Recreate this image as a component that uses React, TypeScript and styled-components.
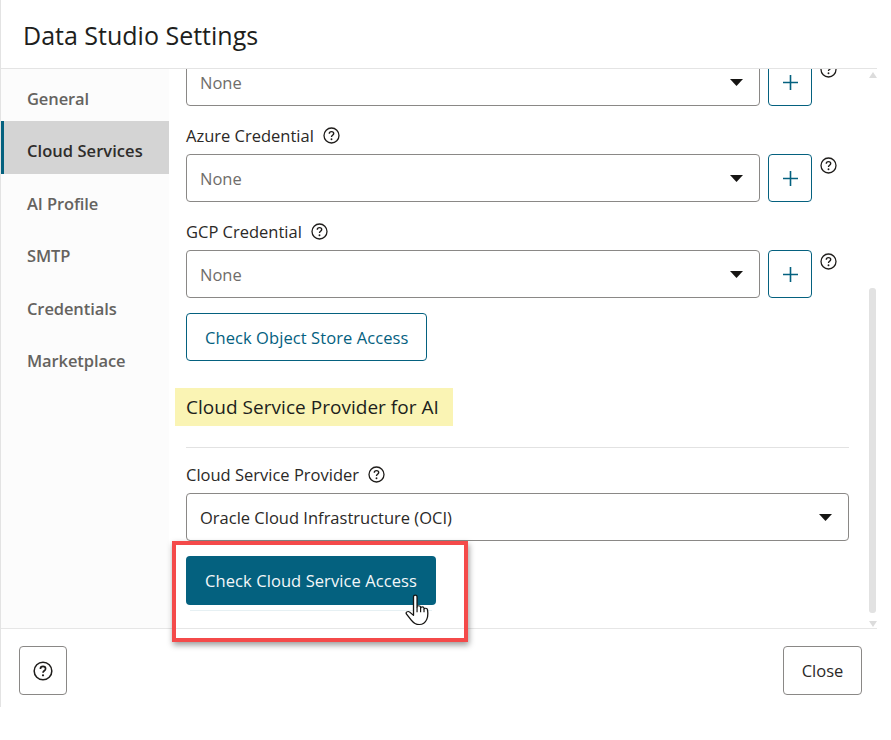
import * as React from 'react';
import styled, { createGlobalStyle } from 'styled-components';

const GlobalStyle = createGlobalStyle`
    html, body {
        margin: 0;
        padding: 0;
        background: #fff;
    }
    body {
        font-family: 'Open Sans', 'Noto Sans', sans-serif;
        color: #201e1c;
    }
`;

const HelpIcon: React.FC<{ size?: number }> = ({ size = 17 }) => (
    <svg width={size} height={size} viewBox="0 0 17 17" fill="none">
        <circle cx="8.5" cy="8.5" r="7.5" stroke="#1f1d1b" strokeWidth="1.3" />
        <path d="M6.3 6.7c0-1.3 1-2.1 2.2-2.1s2.2.8 2.2 2c0 1.7-2.2 1.7-2.2 3.3" stroke="#1f1d1b" strokeWidth="1.4" />
        <circle cx="8.5" cy="12.2" r=".95" fill="#1f1d1b" />
    </svg>
);

const Caret = () => (
    <svg width="13" height="7" viewBox="0 0 13 7">
        <path d="M0 0h13L6.5 7z" fill="#161513" />
    </svg>
);

const PlusIcon = () => (
    <svg width="15" height="15" viewBox="0 0 15 15">
        <path d="M7.5 0v15M0 7.5h15" stroke="#04617f" strokeWidth="1.6" />
    </svg>
);

const HandCursor = () => (
    <svg width="26" height="32" viewBox="0 0 22 31" preserveAspectRatio="none">
        <path
            d="M7.2 2.600c0-2 3-2 3 0v10c0-1.600 2.800-1.600 3 0v1c.1-1.500 2.700-1.500 2.900 0v1.200c.2-1.400 2.700-1.300 2.900.3.5 3.500.4 7-.6 9.500-.9 2.400-2.800 5-6.300 5-3.500 0-5.100-1.800-6.800-4.300L1.300 19.500c-1.100-1.800 1.100-3.400 2.700-2l3.200 3.200z"
            fill="#fff"
            stroke="#161513"
            strokeWidth="1.1"
            strokeLinejoin="round"
        />
        <path d="M10.200 12.600v5M13.200 13.600v4M16.100 14.800v3" stroke="#161513" strokeWidth="1" fill="none" />
    </svg>
);

const Page = styled.div`
    width: 891px;
    height: 740px;
    background: #fff;
    overflow: hidden;
    position: relative;
`;

const Dialog = styled.div`
    width: 877px;
    height: 707px;
    border-left: 1px solid #e3e3e3;
    box-sizing: border-box;
    display: flex;
    flex-direction: column;
`;

const Header = styled.header`
    height: 69px;
    flex: none;
    box-sizing: border-box;
    border-bottom: 1px solid #e4e4e4;
    padding: 18px 0 0 22px;
    font-size: 25px;
    line-height: 34px;
`;

const Body = styled.div`
    flex: 1;
    min-height: 0;
    display: flex;
`;

const Sidebar = styled.nav`
    width: 168px;
    flex: none;
    background: #fcfcfc;
`;

const NavItem = styled.div<{ $active?: boolean }>`
    height: 52.5px;
    box-sizing: border-box;
    padding: 18px 0 0 ${(p) => (p.$active ? 23 : 26)}px;
    font-size: 16.5px;
    line-height: 24px;
    font-weight: 600;
    letter-spacing: ${(p) => (p.$active ? '0.05px' : '-0.1px')};
    color: ${(p) => (p.$active ? '#2f2d2b' : '#65635f')};
    background: ${(p) => (p.$active ? '#d4d4d4' : 'transparent')};
    border-left: ${(p) => (p.$active ? '3px solid #04617f' : 'none')};
    &:first-child {
        margin-top: -0.5px;
    }
`;

const ContentArea = styled.main`
    flex: 1;
    min-width: 0;
    position: relative;
    overflow: hidden;
    padding-left: 17px;
`;

const ScrollInner = styled.div`
    width: 663px;
    margin-top: -11px;
    display: flex;
    flex-direction: column;
`;

const Label = styled.div`
    height: 24px;
    margin-bottom: 7px;
    display: flex;
    align-items: center;
    gap: 9px;
    font-size: 16.5px;
    color: #2b2927;
`;

const FieldRow = styled.div`
    display: flex;
    align-items: flex-start;
    margin-bottom: 17px;
`;

const Select = styled.div<{ $muted?: boolean }>`
    flex: 1;
    height: 48px;
    box-sizing: border-box;
    border: 1px solid #8a8886;
    border-radius: 4px;
    padding: 0 16px 0 13px;
    display: flex;
    align-items: center;
    justify-content: space-between;
    font-size: 16.5px;
    color: ${(p) => (p.$muted ? '#6f6d6a' : '#2b2927')};
`;

const PlusButton = styled.div`
    width: 44px;
    height: 48px;
    margin-left: 8px;
    box-sizing: border-box;
    border: 1px solid #04617f;
    border-radius: 4px;
    display: flex;
    align-items: center;
    justify-content: center;
`;

const RowHelp = styled.div`
    width: 17px;
    height: 17px;
    margin: 3px 12px 0 8px;
`;

const OutlineButton = styled.div`
    align-self: flex-start;
    margin-top: -2px;
    height: 48px;
    box-sizing: border-box;
    border: 1px solid #04617f;
    border-radius: 4px;
    padding: 0 18px;
    display: flex;
    align-items: center;
    font-size: 16.5px;
    letter-spacing: 0.08px;
    color: #04617f;
`;

const SectionTitle = styled.h2`
    align-self: flex-start;
    margin: 27px 0 0 -11px;
    height: 38px;
    padding: 0 14px 0 11px;
    background: #faf4b4;
    display: flex;
    align-items: center;
    font-size: 19px;
    font-weight: 400;
    letter-spacing: 0.03px;
    color: #201e1c;
`;

const Divider = styled.hr`
    width: 100%;
    margin: 21px 0 14px;
    border: none;
    border-top: 1px solid #e2e2e2;
`;

const SolidButton = styled.div`
    align-self: flex-start;
    position: relative;
    margin-top: -2px;
    width: 250px;
    height: 49px;
    box-sizing: border-box;
    background: #04617f;
    border-radius: 4px;
    display: flex;
    align-items: center;
    justify-content: center;
    font-size: 16.5px;
    letter-spacing: 0.08px;
    color: #f3f7f9;
    &::after {
        content: '';
        position: absolute;
        left: 4px;
        right: 4px;
        bottom: -6px;
        height: 1px;
        background: #e6f0f3;
    }
`;

const Scrollbar = styled.div`
    position: absolute;
    top: 0;
    right: 0;
    bottom: 0;
    width: 8px;
`;

const ScrollThumb = styled.div`
    position: absolute;
    top: 219px;
    bottom: 15px;
    left: 0;
    width: 7px;
    border-radius: 3px;
    background: #e2e2e2;
`;

const ScrollArrow = styled.div<{ $down?: boolean }>`
    position: absolute;
    left: 0;
    ${(p) => (p.$down ? 'bottom: 1px;' : 'top: 3px;')}
    width: 0;
    height: 0;
    border-left: 4px solid transparent;
    border-right: 4px solid transparent;
    ${(p) => (p.$down ? 'border-top: 6px solid #dcdcdc;' : 'border-bottom: 6px solid #dcdcdc;')}
`;

const Footer = styled.footer`
    height: 79px;
    flex: none;
    box-sizing: border-box;
    border-top: 1px solid #e6e6e6;
    padding: 17px 15px 0 18px;
    display: flex;
    align-items: flex-start;
    justify-content: space-between;
`;

const FooterButton = styled.div<{ $w: number }>`
    width: ${(p) => p.$w}px;
    height: 49px;
    box-sizing: border-box;
    border: 1px solid #8a8886;
    border-radius: 4px;
    display: flex;
    align-items: center;
    justify-content: center;
    font-size: 16.5px;
    color: #2b2927;
`;

const Callout = styled.div`
    position: absolute;
    left: 172px;
    top: 541px;
    width: 296px;
    height: 101px;
    box-sizing: border-box;
    border: 4px solid #f44a4a;
    box-shadow: 1px 3px 6px rgba(0, 0, 0, 0.4);
    pointer-events: none;
`;

const CursorSpot = styled.div`
    position: absolute;
    left: 405px;
    top: 594px;
    line-height: 0;
`;

const navItems = ['General', 'Cloud Services', 'AI Profile', 'SMTP', 'Credentials', 'Marketplace'];

const credentialRow = (label: string | null) => (
    <React.Fragment key={label ?? 'first'}>
        {label ? (
            <Label>
                {label} <HelpIcon />
            </Label>
        ) : null}
        <FieldRow>
            <Select $muted>
                None <Caret />
            </Select>
            <PlusButton>
                <PlusIcon />
            </PlusButton>
            <RowHelp>
                <HelpIcon />
            </RowHelp>
        </FieldRow>
    </React.Fragment>
);

export default function App() {
    return (
        <Page>
            <GlobalStyle />
            <Dialog>
                <Header>Data Studio Settings</Header>
                <Body>
                    <Sidebar>
                        {navItems.map((item) => (
                            <NavItem key={item} $active={item === 'Cloud Services'}>
                                {item}
                            </NavItem>
                        ))}
                    </Sidebar>
                    <ContentArea>
                        <ScrollInner>
                            {credentialRow(null)}
                            {credentialRow('Azure Credential')}
                            {credentialRow('GCP Credential')}
                            <OutlineButton>Check Object Store Access</OutlineButton>
                            <SectionTitle>Cloud Service Provider for AI</SectionTitle>
                            <Divider />
                            <Label>
                                Cloud Service Provider <HelpIcon />
                            </Label>
                            <FieldRow>
                                <Select>
                                    Oracle Cloud Infrastructure (OCI) <Caret />
                                </Select>
                            </FieldRow>
                            <SolidButton>Check Cloud Service Access</SolidButton>
                        </ScrollInner>
                        <Scrollbar>
                            <ScrollArrow />
                            <ScrollThumb />
                            <ScrollArrow $down />
                        </Scrollbar>
                    </ContentArea>
                </Body>
                <Footer>
                    <FooterButton $w={48}>
                        <HelpIcon size={20} />
                    </FooterButton>
                    <FooterButton $w={79}>Close</FooterButton>
                </Footer>
            </Dialog>
            <Callout />
            <CursorSpot>
                <HandCursor />
            </CursorSpot>
        </Page>
    );
}
